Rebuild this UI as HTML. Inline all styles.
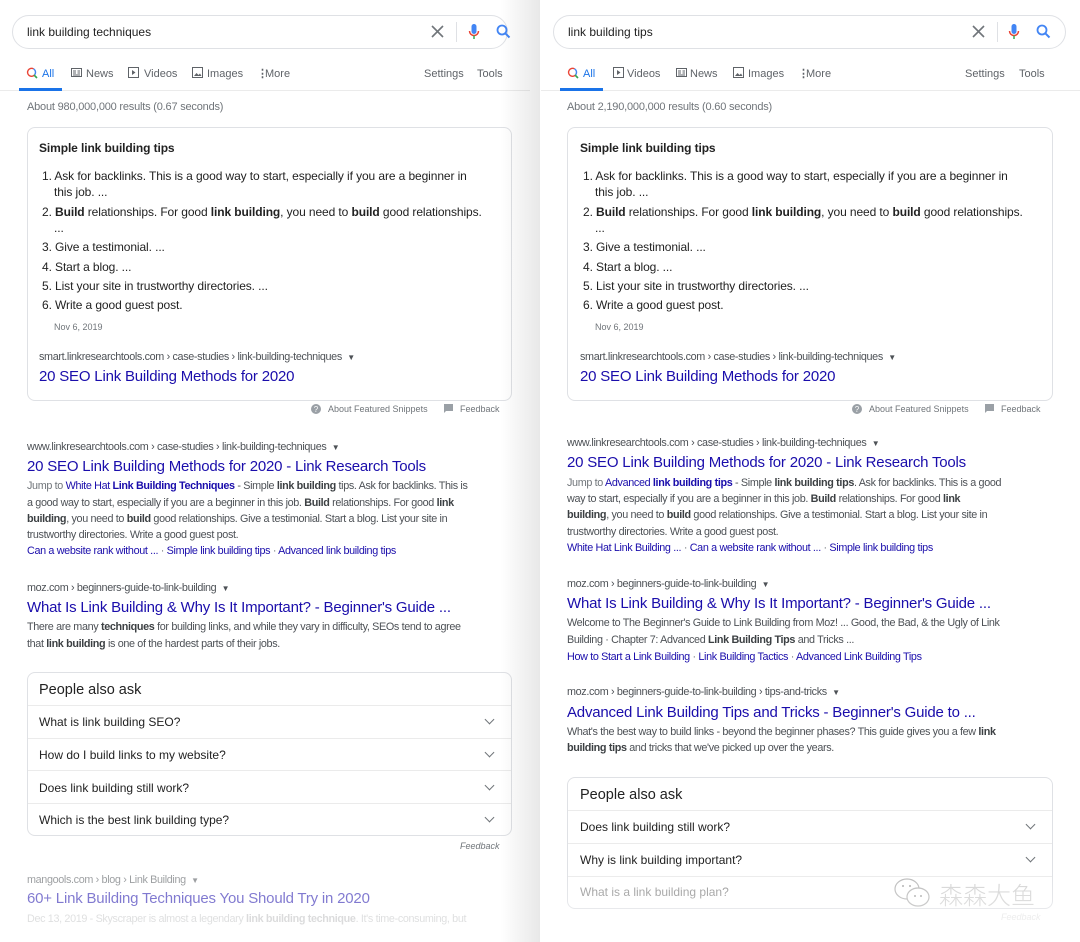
<!DOCTYPE html>
<html><head><meta charset="utf-8"><style>
*{margin:0;padding:0;box-sizing:border-box}
body{width:1080px;height:942px;overflow:hidden;background:#fff;font-family:"Liberation Sans",Arial,sans-serif;position:relative;color:#222}
.p{position:absolute;top:0;height:942px}
.t{position:absolute;white-space:nowrap;line-height:16px;font-size:11px}
.box{position:absolute;border:1px solid #dfe1e5;border-radius:8px;background:#fff}
.sb{position:absolute;left:12px;top:15px;height:34px;border:1px solid #dfe1e5;border-radius:17px}
.g{color:#70757a}.bl{color:#1a0dab}.tb{color:#5f6368}
.ti{font-size:15px;color:#1a0dab;line-height:20px;letter-spacing:-.2px}
.d{color:#4d5156;font-size:10.8px;letter-spacing:-.35px}
.d.bl{color:#1a0dab}
.li{font-size:12px;color:#222;letter-spacing:-.1px}
b{font-weight:bold;color:#3c4043}
.li b{color:#222}
.sep{position:absolute;height:1px;background:#ebebeb}
.ch{position:absolute;width:7px;height:7px;border-right:1.5px solid #70757a;border-bottom:1.5px solid #70757a;transform:rotate(45deg)}
.q{font-size:12px;color:#222}
</style></head><body>

<!-- LEFT PANEL -->
<div class="p" style="left:0;width:540px">
  <div class="sb" style="width:496px"></div>
  <div class="t" style="left:27px;top:24px;font-size:12px;color:#222">link building techniques</div>
  <svg style="position:absolute;left:431px;top:25px" width="13" height="13" viewBox="0 0 13 13"><path d="M1 1L12 12M12 1L1 12" stroke="#70757a" stroke-width="1.6"/></svg>
  <div style="position:absolute;left:456px;top:22px;width:1px;height:20px;background:#dfe1e5"></div>
  <svg style="position:absolute;left:468px;top:23px" width="12" height="18" viewBox="0 0 12 18"><rect x="3.5" y="1" width="5" height="10" rx="2.5" fill="#4285f4"/><path d="M1.5 8a4.5 4.5 0 0 0 9 0" stroke="#ea4335" stroke-width="1.5" fill="none"/><path d="M6 12.5v3.5" stroke="#34a853" stroke-width="1.5"/></svg>
  <svg style="position:absolute;left:496px;top:24px" width="15" height="15" viewBox="0 0 15 15"><circle cx="6" cy="6" r="4.5" stroke="#4285f4" stroke-width="1.8" fill="none"/><path d="M9.3 9.3L13.5 13.5" stroke="#4285f4" stroke-width="2"/></svg>

  <svg style="position:absolute;left:26px;top:67px" width="12" height="12" viewBox="0 0 12 12"><path d="M7.5 1.8A4 4 0 1 0 8.5 8" stroke="#ea4335" stroke-width="1.4" fill="none"/><path d="M7.5 1.8A4 4 0 0 1 8.6 7.8" stroke="#4285f4" stroke-width="1.4" fill="none"/><path d="M8 8L11 11" stroke="#34a853" stroke-width="1.6"/></svg>
  <div class="t" style="left:42px;top:66px;color:#1a73e8">All</div>
  <svg style="position:absolute;left:71px;top:68px" width="11" height="9" viewBox="0 0 11 9"><rect x=".5" y=".5" width="10" height="8" fill="none" stroke="#5f6368"/><path d="M2 3h3M2 5h3M6.5 3h2.5M6.5 5h2.5M2 7h7" stroke="#5f6368"/></svg>
  <div class="t tb" style="left:86px;top:66px">News</div>
  <svg style="position:absolute;left:128px;top:67px" width="11" height="11" viewBox="0 0 11 11"><rect x=".5" y=".5" width="10" height="10" fill="none" stroke="#5f6368"/><path d="M4 3l3.5 2.5L4 8z" fill="#5f6368"/></svg>
  <div class="t tb" style="left:144px;top:66px">Videos</div>
  <svg style="position:absolute;left:192px;top:67px" width="11" height="11" viewBox="0 0 11 11"><rect x=".5" y=".5" width="10" height="10" fill="none" stroke="#5f6368"/><path d="M2 9l2.5-3 2 2 1.5-1.5L9.5 9z" fill="#5f6368"/></svg>
  <div class="t tb" style="left:207px;top:66px">Images</div>
  <div class="t tb" style="left:257px;top:66px;font-weight:bold">&#8942;</div>
  <div class="t tb" style="left:265px;top:66px">More</div>
  <div class="t tb" style="left:424px;top:66px">Settings</div>
  <div class="t tb" style="left:477px;top:66px">Tools</div>
  <div class="sep" style="left:0;top:90px;width:530px"></div>
  <div style="position:absolute;left:19px;top:88px;width:43px;height:3px;background:#1a73e8"></div>
  <div class="t g" style="left:27px;top:99px;letter-spacing:-.2px">About 980,000,000 results (0.67 seconds)</div>

  <div class="box" style="left:27px;top:127px;width:485px;height:274px"></div>
  <div class="t li" style="left:39px;top:140px;font-weight:bold">Simple link building tips</div>
  <div class="t li" style="left:42px;top:168px">1. Ask for backlinks. This is a good way to start, especially if you are a beginner in</div>
  <div class="t li" style="left:54px;top:184px">this job. ...</div>
  <div class="t li" style="left:42px;top:204px">2. <b>Build</b> relationships. For good <b>link building</b>, you need to <b>build</b> good relationships.</div>
  <div class="t li" style="left:54px;top:220px">...</div>
  <div class="t li" style="left:42px;top:239px">3. Give a testimonial. ...</div>
  <div class="t li" style="left:42px;top:259px">4. Start a blog. ...</div>
  <div class="t li" style="left:42px;top:278px">5. List your site in trustworthy directories. ...</div>
  <div class="t li" style="left:42px;top:297px">6. Write a good guest post.</div>
  <div class="t g" style="left:54px;top:319px;font-size:9px">Nov 6, 2019</div>
  <div class="t d" style="left:39px;top:349px">smart.linkresearchtools.com › case-studies › link-building-techniques &nbsp;<span style="font-size:8px">▼</span></div>
  <div class="t ti" style="left:39px;top:367px">20 SEO Link Building Methods for 2020</div>
  <svg style="position:absolute;left:311px;top:404px" width="10" height="10"><circle cx="5" cy="5" r="5" fill="#9aa0a6"/><text x="5" y="8" font-size="8" fill="#fff" text-anchor="middle" font-family="Liberation Sans">?</text></svg>
  <div class="t g" style="left:328px;top:401px;font-size:9px">About Featured Snippets</div>
  <svg style="position:absolute;left:444px;top:404px" width="9" height="10"><path d="M0 0h9v7H2L0 9z" fill="#9aa0a6"/></svg>
  <div class="t g" style="left:460px;top:401px;font-size:9px">Feedback</div>

  <div class="t d" style="left:27px;top:439px">www.linkresearchtools.com › case-studies › link-building-techniques &nbsp;<span style="font-size:8px">▼</span></div>
  <div class="t ti" style="left:27px;top:457px">20 SEO Link Building Methods for 2020 - Link Research Tools</div>
  <div class="t d" style="left:27px;top:478px"><span class="g">Jump to</span> <span class="bl">White Hat <b style="color:#1a0dab">Link Building Techniques</b></span> - Simple <b>link building</b> tips. Ask for backlinks. This is</div>
  <div class="t d" style="left:27px;top:495px">a good way to start, especially if you are a beginner in this job. <b>Build</b> relationships. For good <b>link</b></div>
  <div class="t d" style="left:27px;top:511px"><b>building</b>, you need to <b>build</b> good relationships. Give a testimonial. Start a blog. List your site in</div>
  <div class="t d" style="left:27px;top:527px">trustworthy directories. Write a good guest post.</div>
  <div class="t d bl" style="left:27px;top:543px">Can a website rank without ... <span class="g">·</span> Simple link building tips <span class="g">·</span> Advanced link building tips</div>

  <div class="t d" style="left:27px;top:580px">moz.com › beginners-guide-to-link-building &nbsp;<span style="font-size:8px">▼</span></div>
  <div class="t ti" style="left:27px;top:598px">What Is Link Building &amp; Why Is It Important? - Beginner's Guide ...</div>
  <div class="t d" style="left:27px;top:619px">There are many <b>techniques</b> for building links, and while they vary in difficulty, SEOs tend to agree</div>
  <div class="t d" style="left:27px;top:636px">that <b>link building</b> is one of the hardest parts of their jobs.</div>

  <div class="box" style="left:27px;top:672px;width:485px;height:164px"></div>
  <div class="t" style="left:39px;top:681px;font-size:14.5px;line-height:18px">People also ask</div>
  <div class="sep" style="left:28px;top:705px;width:483px"></div>
  <div class="sep" style="left:28px;top:738px;width:483px"></div>
  <div class="sep" style="left:28px;top:770px;width:483px"></div>
  <div class="sep" style="left:28px;top:803px;width:483px"></div>
  <div class="t q" style="left:39px;top:714px">What is link building SEO?</div>
  <div class="t q" style="left:39px;top:747px">How do I build links to my website?</div>
  <div class="t q" style="left:39px;top:780px">Does link building still work?</div>
  <div class="t q" style="left:39px;top:812px">Which is the best link building type?</div>
  <div class="ch" style="left:486px;top:716px"></div>
  <div class="ch" style="left:486px;top:749px"></div>
  <div class="ch" style="left:486px;top:782px"></div>
  <div class="ch" style="left:486px;top:814px"></div>
  <div class="t g" style="left:460px;top:838px;font-size:9px;font-style:italic">Feedback</div>

  <div style="opacity:.55">
  <div class="t d" style="left:27px;top:872px">mangools.com › blog › Link Building &nbsp;<span style="font-size:8px">▼</span></div>
  <div class="t ti" style="left:27px;top:889px">60+ Link Building Techniques You Should Try in 2020</div>
  </div>
  <div style="opacity:.18"><div class="t d" style="left:27px;top:911px">Dec 13, 2019 - Skyscraper is almost a legendary <b>link building technique</b>. It's time-consuming, but</div></div>
  <div style="position:absolute;left:500px;top:0;width:40px;height:942px;background:linear-gradient(to right,rgba(0,0,0,0),rgba(0,0,0,.09))"></div>
</div>

<!-- RIGHT PANEL -->
<div class="p" style="left:541px;width:539px">
  <div class="sb" style="width:513px"></div>
  <div class="t" style="left:27px;top:24px;font-size:12px;color:#222">link building tips</div>
  <svg style="position:absolute;left:431px;top:25px" width="13" height="13" viewBox="0 0 13 13"><path d="M1 1L12 12M12 1L1 12" stroke="#70757a" stroke-width="1.6"/></svg>
  <div style="position:absolute;left:456px;top:22px;width:1px;height:20px;background:#dfe1e5"></div>
  <svg style="position:absolute;left:467px;top:23px" width="12" height="18" viewBox="0 0 12 18"><rect x="3.5" y="1" width="5" height="10" rx="2.5" fill="#4285f4"/><path d="M1.5 8a4.5 4.5 0 0 0 9 0" stroke="#ea4335" stroke-width="1.5" fill="none"/><path d="M6 12.5v3.5" stroke="#34a853" stroke-width="1.5"/></svg>
  <svg style="position:absolute;left:495px;top:24px" width="15" height="15" viewBox="0 0 15 15"><circle cx="6" cy="6" r="4.5" stroke="#4285f4" stroke-width="1.8" fill="none"/><path d="M9.3 9.3L13.5 13.5" stroke="#4285f4" stroke-width="2"/></svg>

  <svg style="position:absolute;left:26px;top:67px" width="12" height="12" viewBox="0 0 12 12"><path d="M7.5 1.8A4 4 0 1 0 8.5 8" stroke="#ea4335" stroke-width="1.4" fill="none"/><path d="M7.5 1.8A4 4 0 0 1 8.6 7.8" stroke="#4285f4" stroke-width="1.4" fill="none"/><path d="M8 8L11 11" stroke="#34a853" stroke-width="1.6"/></svg>
  <div class="t" style="left:42px;top:66px;color:#1a73e8">All</div>
  <svg style="position:absolute;left:72px;top:67px" width="11" height="11" viewBox="0 0 11 11"><rect x=".5" y=".5" width="10" height="10" fill="none" stroke="#5f6368"/><path d="M4 3l3.5 2.5L4 8z" fill="#5f6368"/></svg>
  <div class="t tb" style="left:86px;top:66px">Videos</div>
  <svg style="position:absolute;left:135px;top:68px" width="11" height="9" viewBox="0 0 11 9"><rect x=".5" y=".5" width="10" height="8" fill="none" stroke="#5f6368"/><path d="M2 3h3M2 5h3M6.5 3h2.5M6.5 5h2.5M2 7h7" stroke="#5f6368"/></svg>
  <div class="t tb" style="left:149px;top:66px">News</div>
  <svg style="position:absolute;left:192px;top:67px" width="11" height="11" viewBox="0 0 11 11"><rect x=".5" y=".5" width="10" height="10" fill="none" stroke="#5f6368"/><path d="M2 9l2.5-3 2 2 1.5-1.5L9.5 9z" fill="#5f6368"/></svg>
  <div class="t tb" style="left:207px;top:66px">Images</div>
  <div class="t tb" style="left:257px;top:66px;font-weight:bold">&#8942;</div>
  <div class="t tb" style="left:265px;top:66px">More</div>
  <div class="t tb" style="left:424px;top:66px">Settings</div>
  <div class="t tb" style="left:478px;top:66px">Tools</div>
  <div class="sep" style="left:0;top:90px;width:539px"></div>
  <div style="position:absolute;left:19px;top:88px;width:43px;height:3px;background:#1a73e8"></div>
  <div class="t g" style="left:26px;top:99px;letter-spacing:-.2px">About 2,190,000,000 results (0.60 seconds)</div>

  <div class="box" style="left:26px;top:127px;width:486px;height:274px"></div>
  <div class="t li" style="left:39px;top:140px;font-weight:bold">Simple link building tips</div>
  <div class="t li" style="left:42px;top:168px">1. Ask for backlinks. This is a good way to start, especially if you are a beginner in</div>
  <div class="t li" style="left:54px;top:184px">this job. ...</div>
  <div class="t li" style="left:42px;top:204px">2. <b>Build</b> relationships. For good <b>link building</b>, you need to <b>build</b> good relationships.</div>
  <div class="t li" style="left:54px;top:220px">...</div>
  <div class="t li" style="left:42px;top:239px">3. Give a testimonial. ...</div>
  <div class="t li" style="left:42px;top:259px">4. Start a blog. ...</div>
  <div class="t li" style="left:42px;top:278px">5. List your site in trustworthy directories. ...</div>
  <div class="t li" style="left:42px;top:297px">6. Write a good guest post.</div>
  <div class="t g" style="left:54px;top:319px;font-size:9px">Nov 6, 2019</div>
  <div class="t d" style="left:39px;top:349px">smart.linkresearchtools.com › case-studies › link-building-techniques &nbsp;<span style="font-size:8px">▼</span></div>
  <div class="t ti" style="left:39px;top:367px">20 SEO Link Building Methods for 2020</div>
  <svg style="position:absolute;left:311px;top:404px" width="10" height="10"><circle cx="5" cy="5" r="5" fill="#9aa0a6"/><text x="5" y="8" font-size="8" fill="#fff" text-anchor="middle" font-family="Liberation Sans">?</text></svg>
  <div class="t g" style="left:328px;top:401px;font-size:9px">About Featured Snippets</div>
  <svg style="position:absolute;left:444px;top:404px" width="9" height="10"><path d="M0 0h9v7H2L0 9z" fill="#9aa0a6"/></svg>
  <div class="t g" style="left:460px;top:401px;font-size:9px">Feedback</div>

  <div class="t d" style="left:26px;top:435px">www.linkresearchtools.com › case-studies › link-building-techniques &nbsp;<span style="font-size:8px">▼</span></div>
  <div class="t ti" style="left:26px;top:453px">20 SEO Link Building Methods for 2020 - Link Research Tools</div>
  <div class="t d" style="left:26px;top:475px"><span class="g">Jump to</span> <span class="bl">Advanced <b style="color:#1a0dab">link building tips</b></span> - Simple <b>link building tips</b>. Ask for backlinks. This is a good</div>
  <div class="t d" style="left:26px;top:491px">way to start, especially if you are a beginner in this job. <b>Build</b> relationships. For good <b>link</b></div>
  <div class="t d" style="left:26px;top:507px"><b>building</b>, you need to <b>build</b> good relationships. Give a testimonial. Start a blog. List your site in</div>
  <div class="t d" style="left:26px;top:524px">trustworthy directories. Write a good guest post.</div>
  <div class="t d bl" style="left:26px;top:540px">White Hat Link Building ... <span class="g">·</span> Can a website rank without ... <span class="g">·</span> Simple link building tips</div>

  <div class="t d" style="left:26px;top:576px">moz.com › beginners-guide-to-link-building &nbsp;<span style="font-size:8px">▼</span></div>
  <div class="t ti" style="left:26px;top:594px">What Is Link Building &amp; Why Is It Important? - Beginner's Guide ...</div>
  <div class="t d" style="left:26px;top:615px">Welcome to The Beginner's Guide to Link Building from Moz! ... Good, the Bad, &amp; the Ugly of Link</div>
  <div class="t d" style="left:26px;top:632px">Building · Chapter 7: Advanced <b>Link Building Tips</b> and Tricks ...</div>
  <div class="t d bl" style="left:26px;top:649px">How to Start a Link Building <span class="g">·</span> Link Building Tactics <span class="g">·</span> Advanced Link Building Tips</div>

  <div class="t d" style="left:26px;top:684px">moz.com › beginners-guide-to-link-building › tips-and-tricks &nbsp;<span style="font-size:8px">▼</span></div>
  <div class="t ti" style="left:26px;top:703px">Advanced Link Building Tips and Tricks - Beginner's Guide to ...</div>
  <div class="t d" style="left:26px;top:724px">What's the best way to build links - beyond the beginner phases? This guide gives you a few <b>link</b></div>
  <div class="t d" style="left:26px;top:740px"><b>building tips</b> and tricks that we've picked up over the years.</div>

  <div class="box" style="left:26px;top:777px;width:486px;height:132px"></div>
  <div class="t" style="left:39px;top:786px;font-size:14.5px;line-height:18px">People also ask</div>
  <div class="sep" style="left:27px;top:810px;width:484px"></div>
  <div class="sep" style="left:27px;top:843px;width:484px"></div>
  <div class="sep" style="left:27px;top:876px;width:484px"></div>
  <div class="t q" style="left:39px;top:819px">Does link building still work?</div>
  <div class="t q" style="left:39px;top:852px">Why is link building important?</div>
  <div class="t q" style="left:39px;top:884px;color:#999">What is a link building plan?</div>
  <div class="ch" style="left:486px;top:821px"></div>
  <div class="ch" style="left:486px;top:854px"></div>
  <div class="t" style="left:460px;top:909px;font-size:9px;font-style:italic;color:#e4e4e4">Feedback</div>
  <!-- watermark -->
  <svg style="position:absolute;left:352px;top:877px" width="40" height="34" viewBox="0 0 40 34"><ellipse cx="14" cy="12" rx="12" ry="10" fill="#fff" stroke="#bbb" stroke-width="1.2"/><ellipse cx="25" cy="20" rx="11" ry="9" fill="#fff" stroke="#bbb" stroke-width="1.2"/><circle cx="22" cy="19" r="1" fill="#aaa"/><circle cx="28" cy="19" r="1" fill="#aaa"/><circle cx="10" cy="9" r="1" fill="#aaa"/><circle cx="17" cy="9" r="1" fill="#aaa"/></svg>
  <div class="t" style="left:398px;top:879px;font-size:24px;line-height:30px;color:#d4d4d4;font-family:'Noto Sans CJK SC',sans-serif;font-weight:300">森森大鱼</div>
  <div style="position:absolute;left:0;top:870px;width:539px;height:72px;background:linear-gradient(rgba(255,255,255,0),rgba(255,255,255,.5))"></div>
</div>
</body></html>
